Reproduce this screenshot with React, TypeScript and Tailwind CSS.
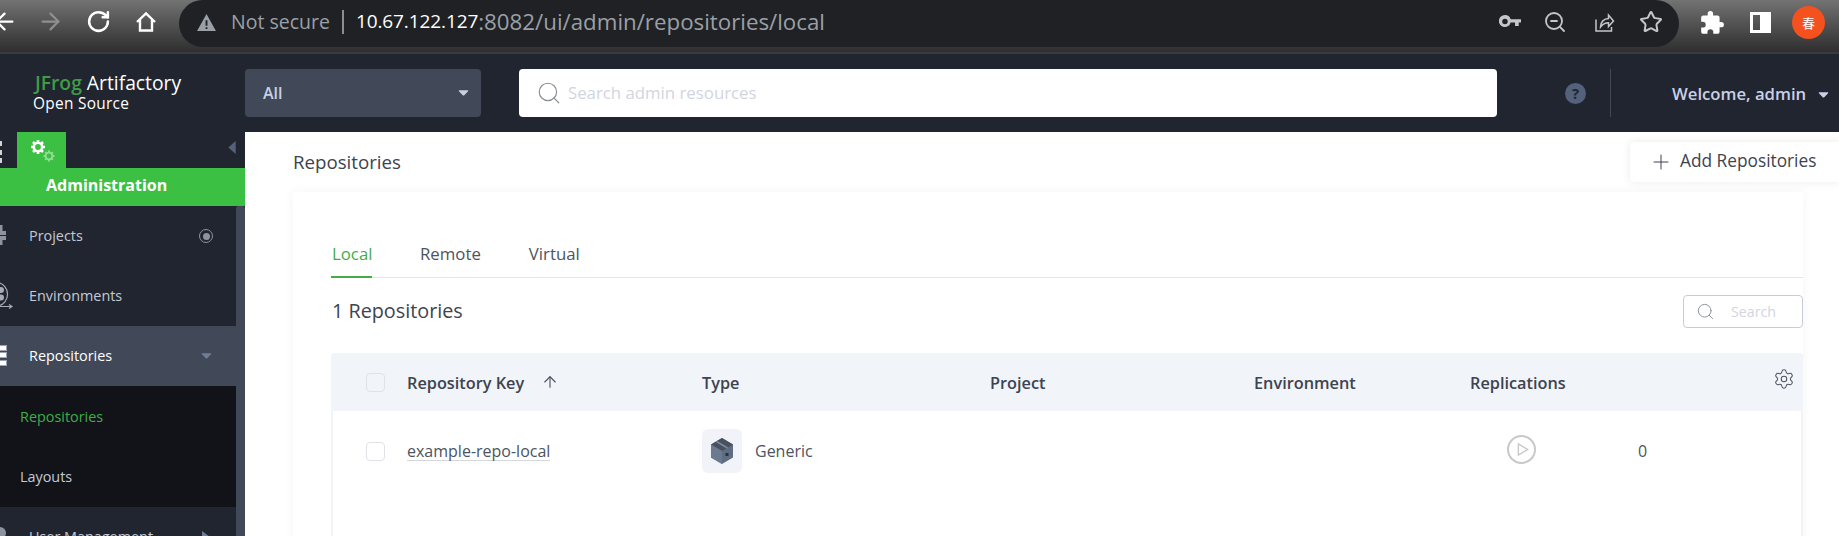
import { ArrowLeft, ArrowRight, Plus, RotateCw, Search, Settings, Star, ZoomOut, ArrowUp } from 'lucide-react';

const Caret = ({ className }: { className: string }) => (
  <svg viewBox="0 0 12 8" className={className} fill="currentColor">
    <path d="M1.5 1h9c.6 0 .9.6.5 1L6.6 6.6c-.3.3-.9.3-1.2 0L1 2c-.4-.4-.1-1 .5-1z" />
  </svg>
);

const GearsIcon = () => (
  <svg viewBox="0 0 28 26" className="w-[28px] h-[26px]">
    <g fill="none" stroke="#fff" strokeWidth="2.6">
      <circle cx="9" cy="9" r="4.2" />
      <path d="M9 2v2.6M9 13.4V16M2 9h2.6M13.4 9H16M4 4l1.900 1.900M12.100 12.100 14 14M14 4l-1.900 1.900M5.900 12.100 4 14" />
    </g>
    <g fill="none" stroke="#8fdc94" strokeWidth="1.900">
      <circle cx="20" cy="18" r="3.400" />
      <path d="M20 12.500v2M20 21.500v2M14.500 18h2M23.500 18h2M16.200 14.200l1.400 1.400M22.400 20.400l1.400 1.400M23.800 14.200l-1.400 1.400M17.600 20.400l-1.400 1.400" />
    </g>
  </svg>
);

const BoxIcon = () => (
  <svg viewBox="0 0 24 28" className="w-[24px] h-[28px]">
    <path d="M12 1 23 7.500v13L12 27 1 20.500v-13z" fill="#5f6d82" />
    <path d="M12 1 23 7.500 12 14 1 7.500z" fill="#47515f" />
    <path d="M12 14v13L1 20.500v-13z" fill="#6c7a90" />
    <path d="m6.500 4.500 11 6.500" stroke="#7c899c" strokeWidth="1.500" />
    <rect x="15.500" y="16" width="3" height="3" fill="#2a303c" />
  </svg>
);

const NavItem = ({ label, active, children, right }: { label: string; active?: boolean; children: React.ReactNode; right?: React.ReactNode }) => (
  <div className={`h-[60px] flex items-center ${active ? 'bg-[#414857] text-white' : 'text-[#c4c9d6]'}`}>
    <div className="w-[29px] h-full flex items-center shrink-0 overflow-hidden">{children}</div>
    <span className="text-[14.400px] flex-1 mb-[1px]">{label}</span>
    <div className="w-[34px] mr-[13px] flex justify-center">{right}</div>
  </div>
);

const colHead = 'text-[16.300px] font-semibold text-[#3d4350] pt-[2px]';
const tableCols = 'grid grid-cols-[75px_296px_288px_264px_216px_1fr] items-center';

export default function App() {
  return (
    <div className="w-[1839px] h-[536px] overflow-hidden flex flex-col bg-white font-['Open_Sans',sans-serif]">
      {/* Browser toolbar */}
      <div className="h-[54px] shrink-0 flex bg-gradient-to-b from-[#737373] to-[#2f2f2f] border-b-2 border-[#3a3b3d]">
        <div className="w-[179px] shrink-0 flex items-center pb-[9px] text-white">
          <ArrowLeft size={27} className="ml-[-9px]" strokeWidth={2} />
          <ArrowRight size={27} className="ml-[19px] text-[#8f8f8f]" strokeWidth={2} />
          <RotateCw size={25} className="ml-[22px]" strokeWidth={2.400} />
          <svg viewBox="0 0 24 24" className="w-[24px] h-[24px] ml-[23px]" fill="none" stroke="currentColor" strokeWidth="2.400">
            <path d="M3 12 12 3.500 21 12M6 9.500V20.500h12V9.500" />
          </svg>
        </div>
        <div className="w-[1500px] h-[47px] rounded-[24px] bg-[#202124] flex items-center pl-[18px] pr-[16px] pb-[4px] shrink-0">
          <svg viewBox="0 0 20 18" className="w-[19px] h-[17px] text-[#9aa0a6] mt-[2px]" fill="currentColor">
            <path d="M10 0 20 18H0zM9 6.500v6h2v-6zM9 14v2h2v-2z" fillRule="evenodd" />
          </svg>
          <span className="ml-[15px] text-[19.500px] text-[#9aa0a6]">Not secure</span>
          <span className="w-[2px] h-[24px] bg-[#8a8d91] mx-[12px]" />
          <span className="text-[19px] text-white tracking-[-0.100px]">10.67.122.127</span>
          <span className="text-[22.300px] text-[#9aa0a6]">:8082/ui/admin/repositories/local</span>
          <div className="ml-auto flex items-center text-[#c4c7c9]">
            <svg viewBox="0 0 24 14" className="w-[22px] h-[13px]" fill="currentColor">
              <path d="M6.500 0a6.500 6.500 0 0 1 6.200 4.500H24V8h-2.500v4h-4V8h-4.800A6.500 6.500 0 1 1 6.500 0zm0 4a3 3 0 1 0 0 6 3 3 0 0 0 0-6z" fillRule="evenodd" />
            </svg>
            <ZoomOut size={24} strokeWidth={1.800} className="ml-[22px]" />
            <svg viewBox="0 0 24 24" className="w-[24px] h-[24px] ml-[24px]" fill="none" stroke="currentColor" strokeWidth="1.500">
              <path d="M5 9.500V21h15.500v-4M9.500 17c0-5 3.500-8.500 8-8.500V5l5 6-5 5.500v-3.700c-3.500 0-6 1.500-8 4.200z" />
            </svg>
            <Star size={24} strokeWidth={2} className="ml-[24px]" />
          </div>
        </div>
        <div className="flex-1 flex items-center pb-[7px] text-white">
          <svg viewBox="0 0 24 24" className="w-[26px] h-[26px] ml-[20px]" fill="currentColor">
            <path d="M20.500 11H19V7a2 2 0 0 0-2-2h-4V3.500a2.500 2.500 0 0 0-5 0V5H4a2 2 0 0 0-2 2v3.800h1.500a2.700 2.700 0 0 1 0 5.400H2V20a2 2 0 0 0 2 2h3.800v-1.500a2.700 2.700 0 0 1 5.400 0V22H17a2 2 0 0 0 2-2v-4h1.500a2.500 2.500 0 0 0 0-5z" />
          </svg>
          <div className="w-[21px] h-[21px] ml-[25px] border-[3px] border-r-[11px] border-white" />
          <div className="w-[33px] h-[33px] ml-[21px] rounded-full bg-[#f4511e] flex items-center justify-center text-[13px] font-['Noto_Sans_CJK_SC',sans-serif]">春</div>
        </div>
      </div>

      {/* App header */}
      <div className="h-[78px] shrink-0 bg-[#212530] flex items-center">
        <div className="w-[245px] shrink-0 pl-[33px] text-white leading-none mt-[-1px]">
          <div className="text-[19.300px] ml-[2px]"><span className="font-semibold text-[#3f9c46]">JFrog</span> Artifactory</div>
          <div className="text-[15.400px] mt-[4px] tracking-[0.300px]">Open Source</div>
        </div>
        <div className="w-[236px] h-[48px] rounded-[4px] bg-[#414857] flex items-center justify-between pl-[18px] pr-[12px] text-[#c8d0e4]">
          <span className="text-[16px] font-semibold">All</span>
          <Caret className="w-[11px] h-[8px]" />
        </div>
        <div className="w-[978px] h-[48px] ml-[38px] rounded-[4px] bg-white flex items-center pl-[17px] text-[#d1d5e0]">
          <Search size={26} strokeWidth={1.100} className="text-[#8b8f98]" />
          <span className="ml-[6px] text-[16.800px]">Search admin resources</span>
        </div>
        <div className="w-[21px] h-[21px] ml-[68px] rounded-full bg-[#53617a] flex items-center justify-center text-[15px] font-bold text-[#212530]">?</div>
        <div className="w-[1px] h-[48px] ml-[24px] bg-[#414857]" />
        <span className="ml-[61px] text-[16.700px] font-semibold text-[#c8d0e8] mt-[2px]">Welcome, admin</span>
        <Caret className="w-[11px] h-[8px] ml-[12px] mt-[3px] text-[#c8d0e8]" />
      </div>

      <div className="flex-1 flex min-h-0">
        {/* Sidebar */}
        <div className="w-[245px] shrink-0 bg-[#212530] flex flex-col">
          <div className="h-[36px] flex shrink-0">
            <div className="w-[2px] mt-[9px] h-[22px] flex flex-col justify-between">
              <div className="h-[5px] bg-white/80" /><div className="h-[5px] bg-white/80" /><div className="h-[5px] bg-white/80" />
            </div>
            <div className="w-[49px] ml-[15px] bg-[#3bc043] pl-[12px] pt-[6px]"><GearsIcon /></div>
            <svg viewBox="0 0 8 14" className="w-[8px] h-[13px] ml-auto mr-[9px] mt-[9px] text-[#53617a]" fill="currentColor">
              <path d="M8 0v14L0 7z" />
            </svg>
          </div>
          <div className="h-[38px] shrink-0 bg-[#3bc043] pl-[46px] pb-[4px] flex items-center text-[16px] font-bold text-white">Administration</div>
          <div className="flex-1 flex min-h-0">
            <div className="w-[236px] shrink-0">
              <NavItem label="Projects" right={<div className="w-[14px] h-[14px] rounded-full border-[1.500px] border-[#8e93a0] flex items-center justify-center"><div className="w-[7px] h-[7px] rounded-full bg-[#8e93a0]" /></div>}>
                <svg viewBox="0 0 6 20" className="w-[6px] h-[20px] mb-[2px]" fill="#8e93a0">
                  <path d="M0 0h2.500v6H6v4H0zM0 11h6v4H2.500v5H0z" />
                </svg>
              </NavItem>
              <NavItem label="Environments">
                <svg viewBox="0 0 13 28" className="w-[13px] h-[28px] mb-[3px]" fill="none" stroke="#a6abb6" strokeWidth="1.200">
                  <path d="M-2 1.500a12 12 0 0 1 0 23.500M-2 25.500H11M9 23.500l3 2-3 2" />
                  <circle cx="1" cy="9" r="3" fill="#a6abb6" stroke="none" />
                  <circle cx="1" cy="16.500" r="3" fill="#a6abb6" stroke="none" />
                </svg>
              </NavItem>
              <NavItem label="Repositories" active right={<Caret className="w-[11px] h-[8px] text-[#6f7d96]" />}>
                <div className="w-[7px] h-[21px] mb-[2px] flex flex-col justify-between">
                  <div className="h-[6px] bg-white border-y border-r border-[#9aa2b3]" /><div className="h-[6px] bg-white border-y border-r border-[#9aa2b3]" /><div className="h-[6px] bg-white border-y border-r border-[#9aa2b3]" />
                </div>
              </NavItem>
              <div className="h-[121px] bg-[#111318] flex flex-col justify-around pl-[20px] pt-[1px] text-[14.400px] text-[#c4c9d6]">
                <span className="text-[#3fae47]">Repositories</span>
                <span>Layouts</span>
              </div>
              <NavItem
                label="User Management"
                right={
                  <svg viewBox="0 0 8 12" className="w-[8px] h-[12px] text-[#6f7d96]" fill="currentColor">
                    <path d="M0 0v12l8-6z" />
                  </svg>
                }
              >
                <div className="w-[6px] h-[12px] bg-[#8e93a0] mb-[8px] rounded-r-full" />
              </NavItem>
            </div>
            <div className="flex-1 bg-[#414857] rounded-t-[3px]" />
          </div>
        </div>

        {/* Main content */}
        <div className="flex-1 min-w-0 bg-white pl-[48px] pt-[10px]">
          <div className="h-[40px] flex items-center justify-between">
            <span className="text-[18.700px] text-[#3d4350]">Repositories</span>
            <div className="w-[209px] h-[40px] rounded-l-[4px] bg-white shadow-[0_0_8px_rgba(40,50,80,0.1)] flex items-center pl-[19px] text-[#3d4350]">
              <Plus size={24} strokeWidth={1} />
              <span className="ml-[7px] text-[17.300px] font-medium mb-[2px]">Add Repositories</span>
            </div>
          </div>
          <div className="mt-[10px] mr-[36px] h-[400px] pl-[38px] shadow-[0_0_10px_rgba(40,50,80,0.05)]">
            <div className="h-[86px] pt-[50px] border-b border-[#e3e5ea] flex gap-[48px] text-[16.800px] leading-[24px] text-[#4d5360]">
              <div className="h-[36px] border-b-2 border-[#3fae47] text-[#3fae47] w-[41px] px-[1px]">Local</div>
              <div>Remote</div>
              <div>Virtual</div>
            </div>
            <div className="h-[75px] flex items-center justify-between">
              <span className="ml-[1px] mt-[-9px] text-[19.800px] font-medium text-[#3d4350]">1 Repositories</span>
              <div className="w-[120px] h-[33px] mt-[-8px] rounded-[4px] border border-[#c9ccd8] flex items-center pl-[12px] text-[#d1d5e0]">
                <Search size={19} strokeWidth={1.200} className="text-[#8b8f98]" />
                <span className="ml-[16px] text-[14.200px]">Search</span>
              </div>
            </div>
            <div className="border-x-2 border-[#f1f3f6] rounded-t-[4px] h-[200px]">
              <div className={`h-[58px] -mx-[2px] rounded-t-[4px] bg-[#f1f4f8] ${tableCols}`}>
                <div className="w-[19px] h-[19px] ml-[35px] rounded-[4px] border border-[#e0e2e8]" />
                <div className={`${colHead} flex items-center ml-[1px]`}>
                  Repository Key
                  <ArrowUp size={18} strokeWidth={1.500} className="ml-[17px] text-[#4d5360] mb-[2px]" />
                </div>
                <div className={colHead}>Type</div>
                <div className={colHead}>Project</div>
                <div className={colHead}>Environment</div>
                <div className="flex items-center justify-between pr-[7px]">
                  <span className={colHead}>Replications</span>
                  <Settings size={22} strokeWidth={1.100} className="text-[#4d5360] mb-[6px] mr-[1px]" />
                </div>
              </div>
              <div className={`h-[80px] -mx-[2px] ${tableCols} text-[16px] text-[#4d5360]`}>
                <div className="w-[19px] h-[19px] ml-[35px] rounded-[4px] border border-[#e0e2e8]" />
                <div className="ml-[1px]"><span className="border-b border-[#d5d7df] leading-[18px] inline-block">example-repo-local</span></div>
                <div className="flex items-center">
                  <div className="w-[40px] h-[44px] rounded-[6px] bg-[#f1f3f8] flex items-center justify-center"><BoxIcon /></div>
                  <span className="ml-[13px]">Generic</span>
                </div>
                <div />
                <div />
                <div className="flex items-center pl-[37px]">
                  <div className="w-[29px] h-[29px] mb-[4px] rounded-full border-2 border-[#c8c8c8] flex items-center justify-center">
                    <svg viewBox="0 0 12 14" className="w-[12px] h-[13px] ml-[2px]" fill="none" stroke="#c8c8c8" strokeWidth="1.500"><path d="M1 1l10 6-10 6z" /></svg>
                  </div>
                  <span className="ml-[102px]">0</span>
                </div>
              </div>
            </div>
          </div>
        </div>
      </div>
    </div>
  );
}
